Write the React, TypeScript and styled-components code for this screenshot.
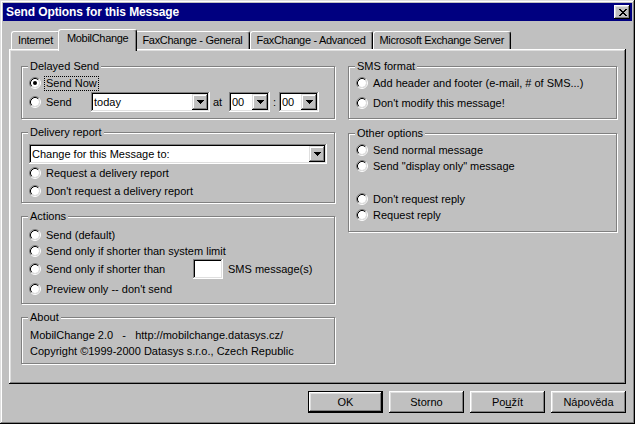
import React from "react";
import styled, { createGlobalStyle, css } from "styled-components";

const GlobalStyle = createGlobalStyle`
  html, body {
    margin: 0;
    padding: 0;
    background: #c0c0c0;
  }
  body {
    font-family: "Liberation Sans", Arial, sans-serif;
    font-size: 11px;
    line-height: 13px;
    color: #000;
  }
  *, *::before, *::after {
    box-sizing: border-box;
  }
`;

// bevels
const raisedBevel = css`
  box-shadow: inset -1px -1px #000, inset 1px 1px #fff, inset -2px -2px #808080,
    inset 2px 2px #dfdfdf;
`;
const sunkenBevel = css`
  box-shadow: inset -1px -1px #fff, inset 1px 1px #808080, inset -2px -2px #dfdfdf,
    inset 2px 2px #000;
`;

const Window = styled.div`
  width: 635px;
  height: 424px;
  padding: 3px;
  background: #c0c0c0;
  box-shadow: inset -1px -1px #000, inset 1px 1px #dfdfdf, inset -2px -2px #808080,
    inset 2px 2px #fff;
  display: flex;
  flex-direction: column;
`;

const TitleBar = styled.div`
  height: 18px;
  flex: none;
  background: #000080;
  display: flex;
  align-items: center;
  justify-content: space-between;
  padding: 0 2px 0 3px;
`;

const Title = styled.span`
  color: #fff;
  font-weight: bold;
  font-size: 12px;
  line-height: 14px;
  letter-spacing: -0.1px;
`;

const CloseButton = styled.div`
  width: 16px;
  height: 14px;
  background: #c0c0c0;
  ${raisedBevel};
  display: flex;
  align-items: center;
  justify-content: center;
  padding: 0 0 0 1px;
`;

const Body = styled.div`
  flex: 1;
  display: flex;
  flex-direction: column;
  padding: 8px 6px 0 6px;
`;

const TabStrip = styled.div`
  display: flex;
  align-items: flex-end;
  height: 20px;
  padding-left: 2px;
`;

const Tab = styled.div<{ $active?: boolean }>`
  position: relative;
  z-index: ${(p) => (p.$active ? 1 : 0)};
  height: ${(p) => (p.$active ? 22 : 18)}px;
  margin: 0 ${(p) => (p.$active ? -2 : 0)}px ${(p) => (p.$active ? -2 : 0)}px;
  padding: 0 ${(p) => (p.$active ? 8 : 6)}px;
  line-height: 16px;
  letter-spacing: -0.3px;
  white-space: nowrap;
  background: #c0c0c0;
  border-left: 1px solid #fff;
  border-top: 1px solid #fff;
  border-right: 1px solid #000;
  border-radius: 3px 3px 0 0;
  box-shadow: inset -1px 0 #808080;
`;

const TabPanel = styled.div`
  height: 335px;
  background: #c0c0c0;
  box-shadow: inset -1px -1px #000, inset 1px 1px #fff, inset -2px -2px #808080,
    inset 2px 2px #dfdfdf;
  display: grid;
  grid-template-columns: 314px 269px;
  column-gap: 13px;
  align-items: start;
  padding: 17px 0 0 12px;
`;

const Column = styled.div<{ $gap: number }>`
  display: flex;
  flex-direction: column;
  gap: ${(p) => p.$gap}px;
`;

const GroupBox = styled.div<{ $pt: number; $pb: number }>`
  position: relative;
  border: 1px solid #808080;
  box-shadow: 1px 1px 0 #fff, inset 1px 1px 0 #fff;
  padding: ${(p) => p.$pt}px 7px ${(p) => p.$pb}px 7px;
`;

const GroupLabel = styled.span`
  position: absolute;
  top: -7px;
  left: 6px;
  padding: 0 2px;
  background: #c0c0c0;
  line-height: 13px;
  white-space: nowrap;
`;

const Row = styled.div<{ $h: number }>`
  display: flex;
  align-items: center;
  height: ${(p) => p.$h}px;
  white-space: nowrap;
`;

const Spacer = styled.div<{ $h: number }>`
  height: ${(p) => p.$h}px;
`;

const OptionText = styled.span<{ $focused?: boolean; $w?: number }>`
  margin-left: ${(p) => (p.$focused ? 3 : 5)}px;
  padding: 0 ${(p) => (p.$focused ? 1 : 0)}px;
  border: ${(p) => (p.$focused ? "1px dotted #000" : "none")};
  line-height: 13px;
  ${(p) => (p.$w ? `width: ${p.$w}px; flex: none;` : "")}
`;

const Caption = styled.span<{ $w?: number; $ml?: number; $center?: boolean }>`
  margin-left: ${(p) => p.$ml ?? 0}px;
  ${(p) => (p.$w ? `width: ${p.$w}px; flex: none;` : "")}
  text-align: ${(p) => (p.$center ? "center" : "left")};
`;

const AboutText = styled.span`
  margin-left: 1px;
  white-space: pre;
`;

const ComboBox = styled.div<{ $w: number }>`
  width: ${(p) => p.$w}px;
  height: 20px;
  flex: none;
  background: #fff;
  ${sunkenBevel};
  padding: 2px;
  display: flex;
`;

const ComboText = styled.span`
  flex: 1;
  padding-left: 1px;
  line-height: 16px;
  overflow: hidden;
`;

const ComboArrow = styled.span`
  width: 16px;
  flex: none;
  background: #c0c0c0;
  box-shadow: inset -1px -1px #000, inset 1px 1px #dfdfdf, inset -2px -2px #808080,
    inset 2px 2px #fff;
  display: flex;
  align-items: center;
  justify-content: center;
`;

const TextField = styled.div`
  width: 30px;
  height: 20px;
  flex: none;
  background: #fff;
  ${sunkenBevel};
`;

const ButtonRow = styled.div`
  display: flex;
  justify-content: flex-end;
  gap: 6px;
  margin-top: 7px;
`;

const PushButton = styled.div<{ $default?: boolean }>`
  width: 75px;
  height: 22px;
  display: flex;
  align-items: center;
  justify-content: center;
  background: #c0c0c0;
  line-height: 13px;
  ${(p) =>
    p.$default
      ? css`
          box-shadow: inset 1px 1px #000, inset -1px -1px #000, inset -2px -2px #000,
            inset 2px 2px #fff, inset -3px -3px #808080, inset 3px 3px #dfdfdf;
        `
      : raisedBevel};
`;

const RadioIcon = ({ checked }: { checked?: boolean }) => (
  <svg width="12" height="12" viewBox="0 0 12 12" style={{ flex: "none" }}>
    <circle cx="6" cy="6" r="4" fill="#fff" />
    <path d="M2.11 9.89 A5.5 5.5 0 0 1 9.89 2.11" stroke="#808080" fill="none" />
    <path d="M9.89 2.11 A5.5 5.5 0 0 1 2.11 9.89" stroke="#fff" fill="none" />
    <path d="M2.82 9.18 A4.5 4.5 0 0 1 9.18 2.82" stroke="#000" fill="none" />
    <path d="M9.18 2.82 A4.5 4.5 0 0 1 2.82 9.18" stroke="#dfdfdf" fill="none" />
    {checked && <circle cx="6" cy="6" r="2" fill="#000" />}
  </svg>
);

const ArrowIcon = () => (
  <svg width="7" height="4" viewBox="0 0 7 4" shapeRendering="crispEdges">
    <path d="M0 0h7v1H0z M1 1h5v1H1z M2 2h3v1H2z M3 3h1v1H3z" fill="#000" />
  </svg>
);

const CloseIcon = () => (
  <svg width="8" height="7" viewBox="0 0 8 7" shapeRendering="crispEdges">
    <path
      d="M0 0h2v1H0z M6 0h2v1H6z M1 1h2v1H1z M5 1h2v1H5z M2 2h4v1H2z M3 3h2v1H3z M2 4h4v1H2z M1 5h2v1H1z M5 5h2v1H5z M0 6h2v1H0z M6 6h2v1H6z"
      fill="#000"
    />
  </svg>
);

interface RadioProps {
  label: string;
  checked?: boolean;
  focused?: boolean;
  width?: number;
}

const RadioOption = ({ label, checked, focused, width }: RadioProps) => (
  <>
    <RadioIcon checked={checked} />
    <OptionText $focused={focused} $w={width}>
      {label}
    </OptionText>
  </>
);

const Combo = ({ value, width }: { value: string; width: number }) => (
  <ComboBox $w={width}>
    <ComboText>{value}</ComboText>
    <ComboArrow>
      <ArrowIcon />
    </ComboArrow>
  </ComboBox>
);

const tabs = [
  "Internet",
  "MobilChange",
  "FaxChange - General",
  "FaxChange - Advanced",
  "Microsoft Exchange Server",
];

export default function App() {
  return (
    <>
      <GlobalStyle />
      <Window>
        <TitleBar>
          <Title>Send Options for this Message</Title>
          <CloseButton>
            <CloseIcon />
          </CloseButton>
        </TitleBar>
        <Body>
          <TabStrip>
            {tabs.map((t, i) => (
              <Tab key={t} $active={i === 1}>
                {t}
              </Tab>
            ))}
          </TabStrip>
          <TabPanel>
            <Column $gap={13}>
              {/* Delayed Send */}
              <GroupBox $pt={7} $pb={6}>
                <GroupLabel>Delayed Send</GroupLabel>
                <Row $h={18}>
                  <RadioOption label="Send Now" checked focused />
                </Row>
                <Row $h={20}>
                  <RadioOption label="Send" width={45} />
                  <Combo value="today" width={119} />
                  <Caption $ml={3} $w={16}>
                    at
                  </Caption>
                  <Combo value="00" width={41} />
                  <Caption $w={9} $center>
                    :
                  </Caption>
                  <Combo value="00" width={40} />
                </Row>
              </GroupBox>

              {/* Delivery report */}
              <GroupBox $pt={10} $pb={2}>
                <GroupLabel>Delivery report</GroupLabel>
                <Row $h={21}>
                  <Combo value="Change for this Message to:" width={298} />
                </Row>
                <Row $h={18}>
                  <RadioOption label="Request a delivery report" />
                </Row>
                <Row $h={18}>
                  <RadioOption label="Don't request a delivery report" />
                </Row>
              </GroupBox>

              {/* Actions */}
              <GroupBox $pt={10} $pb={4}>
                <GroupLabel>Actions</GroupLabel>
                <Row $h={16}>
                  <RadioOption label="Send (default)" />
                </Row>
                <Row $h={16}>
                  <RadioOption label="Send only if shorter than system limit" />
                </Row>
                <Row $h={20}>
                  <RadioOption label="Send only if shorter than" width={147} />
                  <TextField />
                  <Caption $ml={5}>SMS message(s)</Caption>
                </Row>
                <Row $h={20}>
                  <RadioOption label="Preview only -- don't send" />
                </Row>
              </GroupBox>

              {/* About */}
              <GroupBox $pt={9} $pb={4}>
                <GroupLabel>About</GroupLabel>
                <Row $h={16}>
                  <AboutText>MobilChange 2.0   -   http://mobilchange.datasys.cz/</AboutText>
                </Row>
                <Row $h={16}>
                  <AboutText>Copyright ©1999-2000 Datasys s.r.o., Czech Republic</AboutText>
                </Row>
              </GroupBox>
            </Column>

            <Column $gap={14}>
              {/* SMS format */}
              <GroupBox $pt={7} $pb={4}>
                <GroupLabel>SMS format</GroupLabel>
                <Row $h={18}>
                  <RadioOption label="Add header and footer (e-mail, # of SMS...)" />
                </Row>
                <Row $h={22}>
                  <RadioOption label="Don't modify this message!" />
                </Row>
              </GroupBox>

              {/* Other options */}
              <GroupBox $pt={8} $pb={8}>
                <GroupLabel>Other options</GroupLabel>
                <Row $h={16}>
                  <RadioOption label="Send normal message" />
                </Row>
                <Row $h={16}>
                  <RadioOption label={'Send "display only" message'} />
                </Row>
                <Spacer $h={17} />
                <Row $h={16}>
                  <RadioOption label="Don't request reply" />
                </Row>
                <Row $h={16}>
                  <RadioOption label="Request reply" />
                </Row>
              </GroupBox>
            </Column>
          </TabPanel>

          <ButtonRow>
            <PushButton $default>OK</PushButton>
            <PushButton>Storno</PushButton>
            <PushButton>
              <span>
                Po<u>u</u>žít
              </span>
            </PushButton>
            <PushButton>Nápověda</PushButton>
          </ButtonRow>
        </Body>
      </Window>
    </>
  );
}
